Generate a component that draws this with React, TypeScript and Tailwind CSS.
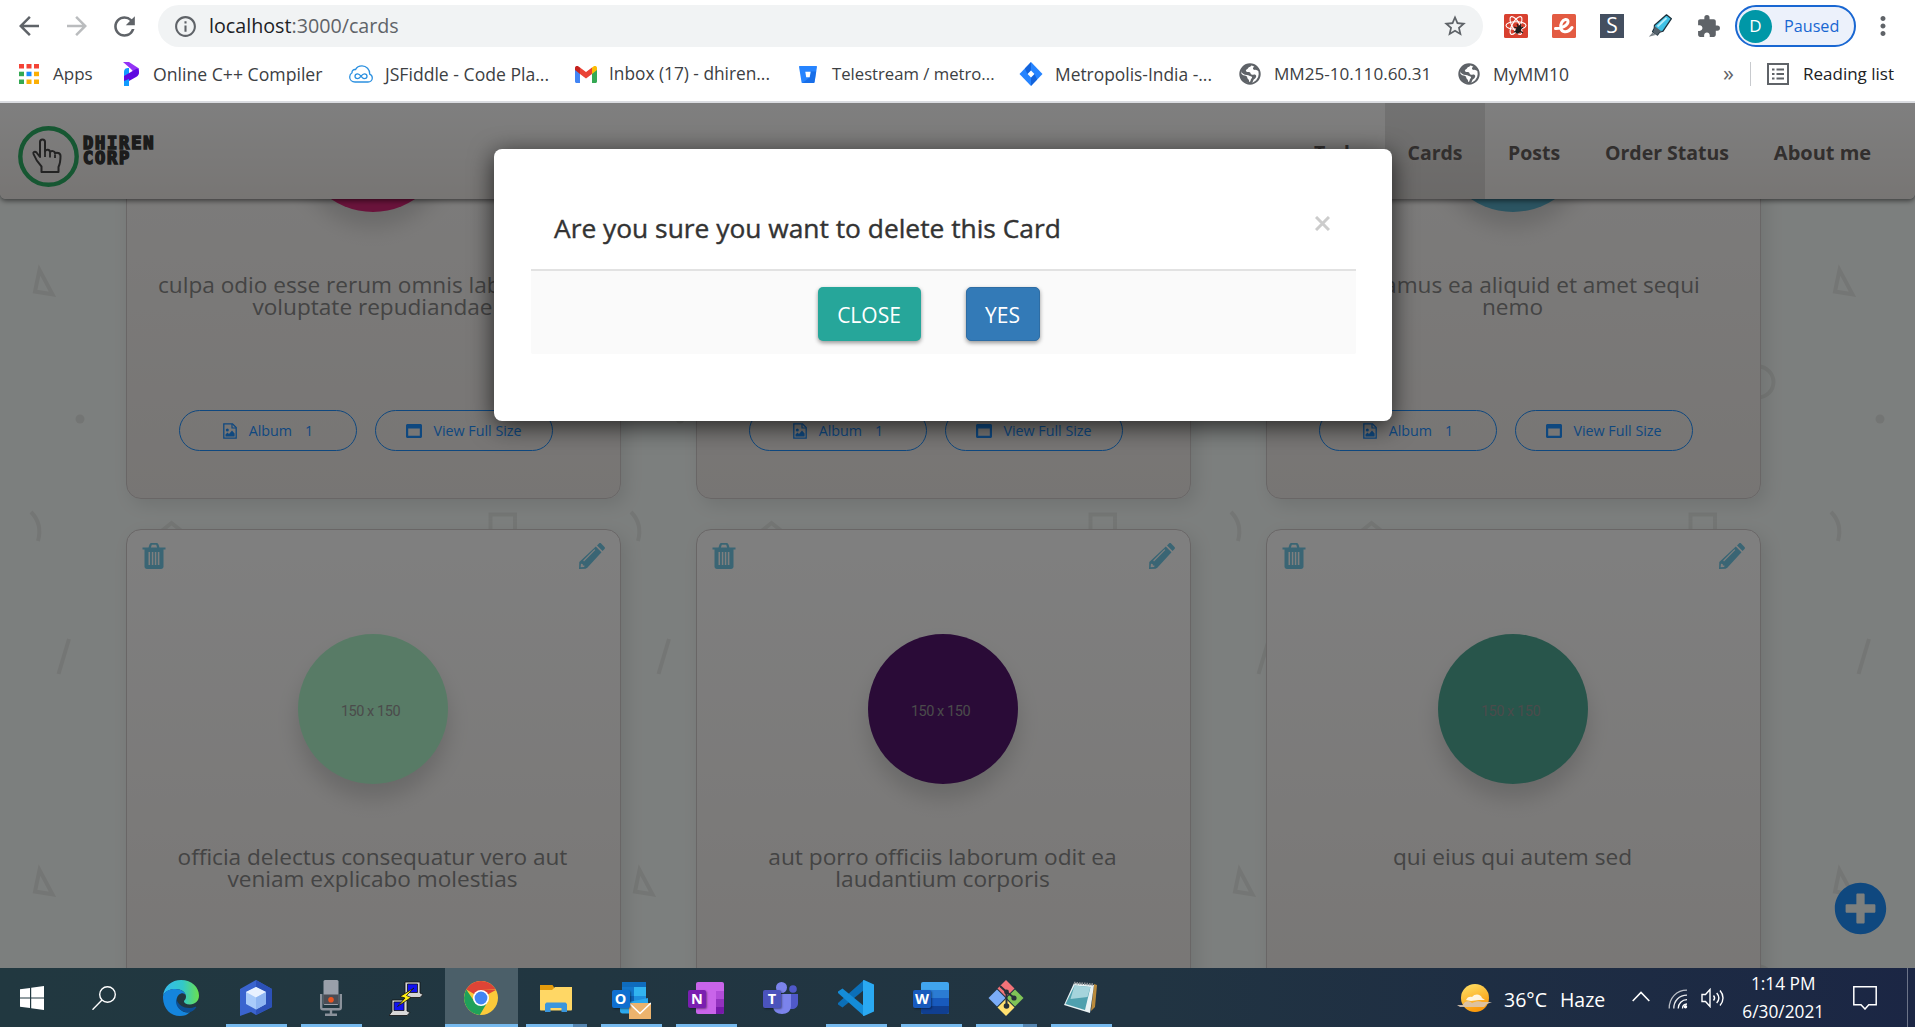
import React from 'react';
import {
  MdArrowBack,
  MdArrowForward,
  MdRefresh,
  MdInfoOutline,
  MdStarBorder,
  MdExtension,
  MdMoreVert,
} from 'react-icons/md';
import { FaPlusCircle } from 'react-icons/fa';

/* ---------- browser chrome icons ---------- */

const ReactDevIcon = () => (
  <svg viewBox="0 0 24 24" className="size-6 shrink-0">
    <rect width="24" height="24" rx="1.5" fill="#d8402f" />
    <g fill="none" stroke="#fff" strokeWidth="1.1">
      <ellipse cx="12" cy="11.5" rx="10" ry="3.8" />
      <ellipse cx="12" cy="11.5" rx="10" ry="3.8" transform="rotate(60 12 11.5)" />
      <ellipse cx="12" cy="11.5" rx="10" ry="3.8" transform="rotate(120 12 11.5)" />
    </g>
    <ellipse cx="14.5" cy="15.5" rx="2.6" ry="4.4" transform="rotate(25 14.5 15.5)" fill="#1d1d1d" />
    <path d="M10 13l3 1M10 18l3-1M19 13l-3 2M19 19l-3-2M13 10l1 2M17 10l-1 2" stroke="#1d1d1d" strokeWidth="1.2" />
  </svg>
);

const EIcon = () => (
  <svg viewBox="0 0 24 24" className="size-6 shrink-0">
    <rect width="24" height="24" rx="1.5" fill="#e35b42" />
    <path d="M3.5 14.5c5 .3 13-2.800 12.500-7.300-.4-2.800-4.500-2.200-6.300 1.300-2 3.800-1.400 9 3 9.300 3 .2 5.300-1.600 7.300-4.300" fill="none" stroke="#fff" strokeWidth="3" strokeLinecap="round" />
  </svg>
);

const MarkerIcon = () => (
  <svg viewBox="0 0 24 24" className="size-6 shrink-0">
    <path d="M18.500 .8l4.900 3.900-8.400 12.500-3.400 1-2.200 2.800-4.800-3.400 1.700-3.200.2-3.200z" fill="#3fc1e6" stroke="#1d2f3a" strokeWidth="1.300" strokeLinejoin="round" />
    <path d="M18.500 4L9.500 12.500" stroke="#b5ecfb" strokeWidth="1.800" />
    <path d="M6.500 12l7.500 5.800-2.800.8-2.200 2.600-4-3.200 1.500-2.900z" fill="#54606a" />
    <path d="M4.600 18.500l3 2.400-6.800 1.800z" fill="#7d858b" />
  </svg>
);

const AppsIcon = () => (
  <svg viewBox="0 0 20 20" className="size-5">
    <path d="M0 0h5v4.500H0zM7.500 0h5v4.500h-5zM15 0h5v4.500h-5z" fill="#f44336" />
    <path d="M0 7.700h5v4.500H0z" fill="#34a853" />
    <path d="M7.500 7.700h5v4.500h-5z" fill="#1a8cff" />
    <path d="M15 7.700h5v4.500h-5z" fill="#fbaf05" />
    <path d="M0 15.500h5V20H0z" fill="#34a853" />
    <path d="M7.500 15.500h5V20h-5zM15 15.500h5V20h-5z" fill="#fbaf05" />
  </svg>
);

const ProgrammizIcon = () => (
  <svg viewBox="0 0 16 24" className="-mt-px h-6 w-4">
    <path d="M0 0h6l10 6.500V11l-3 2-5-6z" fill="#9333f5" />
    <path d="M1 9.500C1 7 3 6 5 6h1v18H1z" fill="#119bff" />
    <path d="M1 14L14 6.500c1.500 1 2 2.500 2 4 0 2-1 3.500-2.500 4.300L6 19v-2l-5 2z" fill="#5f08e0" />
  </svg>
);

const FiddleIcon = () => (
  <svg viewBox="0 0 24 18" className="h-[18px] w-6" fill="none" stroke="#2b90e0">
    <path d="M6 17h13c2.500 0 4.300-1.800 4.300-4 0-1.900-1-3.300-2.600-3.900C21 4.500 17.300.8 13 .8c-3 0-5.400 1.500-6.500 3.800-2-.4-3.700 1-3.500 3.200C1.500 8.600.7 10 .7 12c0 3 2.300 5 5.300 5z" strokeWidth="1.300" />
    <path d="M12 11.200c-1.200-1.500-2.200-2.300-3.400-2.300-1.500 0-2.600 1-2.600 2.400s1.100 2.400 2.600 2.400c2.700 0 3.800-4.800 6.800-4.800 1.500 0 2.600 1 2.600 2.400s-1.100 2.400-2.600 2.400c-1.200 0-2.200-.9-3.400-2.500z" strokeWidth="1.300" />
  </svg>
);

const GmailIcon = () => (
  <svg viewBox="0 0 22 17" className="h-[17px] w-[22px]">
    <path d="M0 3v12.500C0 16.300.7 17 1.500 17H5V7z" fill="#4285f4" />
    <path d="M17 17h3.500c.8 0 1.500-.7 1.500-1.500V3l-5 4z" fill="#34a853" />
    <path d="M17 1.500V8l5-4V2c0-2-2-2.500-3.200-1.700z" fill="#fbbc04" />
    <path d="M5 8V1.500l6 4.600 6-4.600V8l-6 4.500z" fill="#ea4335" />
    <path d="M0 2v2l5 4V1.500L3.200.3C2 -.5 0 0 0 2z" fill="#c5221f" />
  </svg>
);

const BitbucketIcon = () => (
  <svg viewBox="0 0 18 17" className="h-[17px] w-[18px]">
    <path d="M.6 0h16.800c.4 0 .6.300.6.700L15.600 16c-.1.600-.4 1-1 1H3.500c-.6 0-1-.4-1-1L0 .700C0 .3.200 0 .6 0z" fill="#2684ff" />
    <path d="M12 5.500h5.200L15.600 16c-.1.600-.4 1-1 1H3.500l7.300-5.800z" fill="#0f5fd8" opacity=".6" />
    <path d="M6.300 5.700h5.300l-.9 5.600H7.200z" fill="#fff" />
  </svg>
);

const JiraIcon = () => (
  <svg viewBox="0 0 24 24" className="size-6">
    <path d="M12 0l11.500 12L12 24 .5 12z" fill="#2684ff" />
    <path d="M12 0v8.600L8.500 12 5.800 6.500zM12 24v-8.600l3.500-3.400 2.700 5.500z" fill="#0b55cc" opacity=".7" />
    <path d="M12 8.600l3.400 3.400-3.400 3.400L8.600 12z" fill="#fff" />
  </svg>
);

const GlobeIcon = () => (
  <svg viewBox="0 0 22 22" className="size-[22px]">
    <circle cx="11" cy="11" r="9.700" fill="#fff" stroke="#5f6368" strokeWidth="2" />
    <path d="M12 1.500c.5 1.500-.5 2.200-1.700 2.500-1.300.4-1 1.600-2.300 2.200-1.200.5-1.500 1.300-.7 2.200.8.800 2.400.2 3.400.8 1.200.7.700 2 1.800 2.400 1.300.4 2.300-.6 3.500 0 1.700.8 1.500 2.300.5 3.400-1 1-2 1.400-2.300 2.600-.2 1.200-.8 2.200-2.200 2.600C6 20.500 1 17 1.500 10c1.200 1.200 2.200 2.300 4 2.500 1.600.2 2.800.8 2.800 2.300 0 1.400 1.500 1.300 1.700 2.700l.2 1.500c2-.5 1-2.500 2.300-3.500 1.200-1 .5-2-.8-2.300-1.500-.3-2-1.200-3.700-1.200C5 12 2.500 10 2 8 3.500 4 7 1.500 12 1.500z" fill="#5f6368" />
    <path d="M15 3c-.3 1.500-1.500 2-.8 3.200.8 1.300 3 .3 4.300 1.200l2 1C19.500 5.500 17.500 3.500 15 3z" fill="#5f6368" />
  </svg>
);

const ReadingIcon = () => (
  <svg viewBox="0 0 22 22" className="size-[22px]" fill="none" stroke="#5f6368" strokeWidth="2">
    <rect x="1" y="1" width="20" height="20" />
    <path d="M5 6.500h2.500M9.500 6.500H17M5 11h2.500M9.500 11H17M5 15.500h2.500M9.500 15.500H17" />
  </svg>
);

/* ---------- page icons ---------- */

const TrashIcon = () => (
  <svg viewBox="0 0 24 26" className="h-[26px] w-6" fill="#74cbe8">
    <path d="M9.500 0h5c1 0 1.700.6 2 1.500l1 3H23.500v2H.5v-2h6l1-3C7.800.6 8.500 0 9.500 0zm.3 1.800l-.9 2.700h6.200l-.9-2.700z" />
    <path fillRule="evenodd" d="M2.500 6h19v17.500c0 1.600-1 2.500-2.500 2.500H5c-1.500 0-2.500-.9-2.500-2.500zM6.500 9v13h1.600V9zm3.300 0v13h1.500V9zm3 0v13h1.500V9zm3 0v13h1.600V9z" />
  </svg>
);

const PencilIcon = () => (
  <svg viewBox="0 0 26 26" className="size-[26px]" fill="#74cbe8">
    <path d="M18 2.400L20 .5c.6-.6 1.500-.6 2.100 0l3.400 3.400c.6.6.6 1.500 0 2.100l-1.900 2z" />
    <path fillRule="evenodd" d="M16.800 3.500l5.700 5.700L8.300 24.700 6.500 25.800 0 26l.3-6.900zM15.500 6.200L4.200 17.600l.8.800L16.300 7zM2 20.800l-.4 3.400 3.600-.3.300-1.300-1.600-.2-.2-1.500z" />
  </svg>
);

const AlbumIcon = () => (
  <svg viewBox="0 0 14 16" className="h-4 w-[14px]">
    <path d="M.8.800h8.700l3.700 3.700v10.700H.8z" fill="none" stroke="#1e90ff" strokeWidth="1.300" />
    <path d="M9 1v4h4" fill="none" stroke="#1e90ff" strokeWidth="1.200" />
    <circle cx="4.300" cy="7" r="1.500" fill="#1e90ff" />
    <path d="M2.500 13.500v-2l2-2 1.500 1.500 3-3.500 2.600 3v3z" fill="#1e90ff" />
  </svg>
);

const WindowIcon = () => (
  <svg viewBox="0 0 16 14" className="h-[14px] w-4">
    <path fillRule="evenodd" d="M1.500 0h13c.8 0 1.500.6 1.500 1.500v11c0 .9-.7 1.500-1.500 1.500h-13C.7 14 0 13.400 0 12.500v-11C0 .6.700 0 1.500 0zM2.200 4.500v7.300h11.600V4.500z" fill="#1e90ff" />
  </svg>
);

const Logo = () => (
  <div className="flex items-start">
    <svg viewBox="0 0 61 61" className="size-[61px]">
      <circle cx="30.500" cy="30.500" r="28.200" fill="none" stroke="#2cae64" strokeWidth="4.400" />
      <path
        d="M23.500 46v-5.500c-3.500-3.500-6-7.500-8-12.500-.7-2 1.500-3.200 3-1.500l3.500 4.500V16c0-3.500 5-3.500 5 0v9.500c.5-2.500 5-2.500 5 .800 1-2 5-1.500 5 1.200 1.500-1.500 5.500-.800 5.500 2.500 0 5-.5 8-2 11V46z"
        fill="none"
        stroke="#464646"
        strokeWidth="2"
        strokeLinejoin="round"
      />
      <path d="M27 25.500V31M32 27v4.500M37 28.500V32" stroke="#464646" strokeWidth="1.800" />
    </svg>
    <div className='mt-[10px] ml-[4px] font-["DejaVu_Sans_Mono",monospace] text-[17px] leading-[15px] font-bold tracking-[1.800px] text-[#383838] [-webkit-text-stroke:1.600px_#383838]'>
      DHIREN
      <br />
      CORP
    </div>
  </div>
);

/* ---------- browser ---------- */

const bookmarks = [
  { item: 'w-[104px]', box: 'w-[34px]', text: 'Apps', size: 'text-[17px]', icon: <AppsIcon /> },
  { item: 'w-[226px]', box: 'w-[30px]', text: 'Online C++ Compiler', size: 'text-[17.650px]', icon: <ProgrammizIcon /> },
  { item: 'w-[226px]', box: 'w-[36px]', text: 'JSFiddle - Code Pla...', size: 'text-[17.600px]', icon: <FiddleIcon /> },
  { item: 'w-[224px]', box: 'w-[34px]', text: 'Inbox (17) - dhiren...', size: 'text-[17.300px]', icon: <GmailIcon /> },
  { item: 'w-[220px]', box: 'w-[33px]', text: 'Telestream / metro...', size: 'text-[16.700px]', icon: <BitbucketIcon /> },
  { item: 'w-[220px]', box: 'w-[36px]', text: 'Metropolis-India -...', size: 'text-[17.400px]', icon: <JiraIcon /> },
  { item: 'w-[219px]', box: 'w-[35px]', text: 'MM25-10.110.60.31', size: 'text-[17.100px]', icon: <GlobeIcon /> },
  { item: 'w-[120px]', box: 'w-[35px]', text: 'MyMM10', size: 'text-[17.500px]', icon: <GlobeIcon /> },
];

const BrowserChrome = () => (
  <div className="flex h-[103px] shrink-0 flex-col border-b-2 border-[#dadce0] bg-white text-[#3c4043]">
    <div className="flex h-[52px] items-center text-[#5f6368]">
      <MdArrowBack size={30} className="ml-[14px] shrink-0" />
      <MdArrowForward size={30} className="ml-[18px] shrink-0 text-[#babcbe]" />
      <MdRefresh size={31} className="ml-[17px] shrink-0" />
      <div className="ml-[18px] flex h-[42px] w-[1325px] shrink-0 items-center rounded-full bg-[#f1f3f4] pr-[15px] pl-[15px]">
        <MdInfoOutline size={25} />
        <span className="ml-[11px] text-[19.700px] text-[#202124]">
          localhost<span className="text-[#5f6368]">:3000/cards</span>
        </span>
        <MdStarBorder size={26} className="ml-auto" />
      </div>
      <div className="ml-[21px] flex shrink-0 items-center gap-6">
        <ReactDevIcon />
        <EIcon />
        <div className="flex size-6 items-center justify-center bg-[#444f60] text-[21px] text-white">S</div>
        <MarkerIcon />
        <MdExtension size={25} />
      </div>
      <div className="ml-[14px] flex h-[42px] w-[121px] shrink-0 items-center rounded-full border-2 border-[#1967d2] bg-[#ecf1fb] pl-[2px] text-[#1967d2]">
        <div className="flex size-[33px] items-center justify-center rounded-full bg-[#0097a7] text-[17px] text-white">D</div>
        <span className="ml-[12px] text-[16.200px]">Paused</span>
      </div>
      <MdMoreVert size={30} className="ml-[12px] shrink-0" />
    </div>
    <div className="flex h-[44px] items-center pl-[19px] leading-6">
      {bookmarks.map((b) => (
        <div key={b.text} className={`flex shrink-0 items-center whitespace-nowrap ${b.item}`}>
          <span className={`shrink-0 ${b.box}`}>{b.icon}</span>
          <span className={b.size}>{b.text}</span>
        </div>
      ))}
      <span className="ml-auto pb-1 text-[22px] text-[#5f6368]">»</span>
      <div className="ml-[16px] h-6 w-px bg-[#c8cace]" />
      <span className="ml-[16px]">
        <ReadingIcon />
      </span>
      <span className="mr-[21px] ml-[14px] text-[17px] text-[#202124]">Reading list</span>
    </div>
  </div>
);

/* ---------- page ---------- */

const BackgroundPattern = () => (
  <svg className="absolute inset-0 h-full w-full">
    <defs>
      <pattern id="shapes" width="600" height="600" patternUnits="userSpaceOnUse">
        <g fill="none" stroke="#e9edea" strokeWidth="4">
          <path d="M39.500 167L35 188.500l17.500 2.800z" />
          <circle cx="80" cy="316" r="4.500" fill="#e7ebe8" stroke="none" />
          <path d="M31 409c8 8 10 18 7 29" />
          <path d="M159 430l12.500-10 12.500 10v14h-25z" />
          <path d="M490.500 411.500H515V436h-24.500z" />
          <path d="M69 536l-10.500 35" />
          <path d="M117 654l8 5-4 8 7 4-3 11" />
          <circle cx="558" cy="279" r="15.500" />
        </g>
      </pattern>
    </defs>
    <rect width="100%" height="100%" fill="url(#shapes)" />
  </svg>
);

const cards = [
  { title: 'culpa odio esse rerum omnis laboriosam voluptate repudiandae', bg: 'bg-[#d32776]', size: 'text-[22.600px]' },
  { title: 'natus nisi omnis corporis facere molestiae rerum in', bg: 'bg-[#f66b97]', size: 'text-[22.600px]' },
  { title: 'accusamus ea aliquid et amet sequi nemo', bg: 'bg-[#56a8c2]', size: 'text-[22.600px]' },
  { title: 'officia delectus consequatur vero aut veniam explicabo molestias', bg: 'bg-[#b0f7cc]', size: 'text-[22.600px]' },
  { title: 'aut porro officiis laborum odit ea laudantium corporis', bg: 'bg-[#54176f]', size: 'text-[22.700px]' },
  { title: 'qui eius qui autem sed', bg: 'bg-[#51aa97]', size: 'text-[22.650px]' },
];

const PillButton = ({ children }: { children: React.ReactNode }) => (
  <button className="flex h-[41px] w-[178px] items-center justify-center rounded-full border border-[#1e90ff] text-[14.300px] text-[#1e90ff]">
    {children}
  </button>
);

const Card = ({ title, bg, size }: { title: string; bg: string; size: string }) => (
  <div className="flex h-[542px] flex-col rounded-[15px] border border-[#d2cccd] bg-linear-to-b from-white to-[#efebe8] shadow-[5px_6px_18px_rgba(0,0,0,0.1)]">
    <div className="flex h-[104px] items-start justify-between pt-[13px] pr-[15px] pl-[15px]">
      <TrashIcon />
      <PencilIcon />
    </div>
    <div className={`mr-[2px] flex size-[150px] shrink-0 items-center justify-center self-center rounded-full pt-[5px] pr-[4px] font-["Roboto",sans-serif] text-[14.500px] tracking-[-0.450px] text-[#969696] shadow-[0_14px_22px_rgba(0,0,0,0.15)] ${bg}`}>
      150 x 150
    </div>
    <div className={`mt-[62px] h-[136px] pr-[29px] pl-[27px] text-center leading-[22px] text-[#888] ${size}`}>{title}</div>
    <div className="flex pl-[52px]">
      <PillButton>
        <AlbumIcon />
        <span className="ml-[12px]">Album</span>
        <span className="ml-[13px]">1</span>
      </PillButton>
      <span className="w-[18px]" />
      <PillButton>
        <WindowIcon />
        <span className="ml-[11px]">View Full Size</span>
      </PillButton>
    </div>
  </div>
);

const Nav = () => (
  <nav className="relative z-10 flex h-[96px] items-stretch rounded-b-[6px] bg-linear-to-b from-white to-[#efebe8] pr-[21px] pl-[18px] text-[#645e5c] shadow-[0_2px_5px_rgba(0,0,0,0.5)]">
    <div className="pt-[23px]">
      <Logo />
    </div>
    <div className="ml-auto flex items-center text-[19.500px] font-bold">
      <a className="flex h-full w-[94px] items-center justify-center pt-[3px]">Todo</a>
      <a className="flex h-full w-[100px] items-center justify-center bg-black/10 pt-[3px]">Cards</a>
      <a className="flex h-full w-[98px] items-center justify-center pt-[3px]">Posts</a>
      <a className="flex h-full w-[168px] items-center justify-center pt-[3px]">Order Status</a>
      <a className="flex h-full w-[143px] items-center justify-center pt-[4px] text-[20px]">About me</a>
    </div>
  </nav>
);

const DeleteModal = () => (
  <div className="absolute inset-0 z-20 flex justify-center bg-black/50 pt-[46px] pr-[29px]">
    <div className="h-[272px] w-[898px] rounded-[8px] bg-white pr-[36px] pl-[37px] shadow-[0_5px_25px_rgba(0,0,0,0.7)]">
      <div className="flex h-[122px] items-start justify-between border-b-2 border-[#e2e2e2] pr-[26px] pl-[23px]">
        <h4 className="mt-[61px] text-[26.350px] leading-9 text-[#333] [-webkit-text-stroke:0.400px_#333]">
          Are you sure you want to delete this Card
        </h4>
        <svg viewBox="0 0 15 15" className="mt-[67px] size-[15px]" stroke="#ccc" strokeWidth="3">
          <path d="M1 1l13 13M14 1L1 14" />
        </svg>
      </div>
      <div className="flex h-[83px] items-start justify-center gap-[45px] rounded-b-[2px] bg-[#fafafa] pt-[16px] pr-[30px] text-[21px] text-white">
        <button className="h-[54px] w-[103px] rounded-[5px] bg-[#26a69a] pt-[4px] shadow-[0_2px_4px_rgba(0,0,0,0.4)]">CLOSE</button>
        <button className="h-[54px] w-[74px] rounded-[5px] border border-[#2e6da4] bg-[#337ab7] pt-[4px] shadow-[0_2px_4px_rgba(0,0,0,0.4)]">YES</button>
      </div>
    </div>
  </div>
);

const Page = () => (
  <div className="relative h-[865px] shrink-0 overflow-hidden bg-[#f9fefc]">
    <BackgroundPattern />
    <Nav />
    <main className="relative -mt-[242px] ml-[126px] grid w-[1635px] grid-cols-[495px_495px_495px] justify-between gap-y-[30px]">
      {cards.map((c) => (
        <Card key={c.title} {...c} />
      ))}
    </main>
    <FaPlusCircle size={53} className="absolute right-[28px] bottom-[33px] text-[#1e90ff]" />
    <DeleteModal />
  </div>
);

/* ---------- taskbar ---------- */

const WinIcon = () => (
  <svg viewBox="0 0 24 24" className="size-6" fill="#fff">
    <path d="M0 3.300l10-1.400V11.400H0zM11.200 1.700L24 0v11.400H11.200zM0 12.600h10v9.500L0 20.700zM11.200 12.600H24V24l-12.800-1.700z" />
  </svg>
);
const SearchIcon = () => (
  <svg viewBox="0 0 24 24" className="size-6" fill="none" stroke="#fff" strokeWidth="1.400">
    <circle cx="15.500" cy="8.500" r="7.800" />
    <path d="M10 14L.5 23.700" />
  </svg>
);
const EdgeIcon = () => (
  <svg viewBox="0 0 36 36" className="size-9">
    <defs>
      <linearGradient id="edgeTop" x1="0" x2="1">
        <stop offset="0" stopColor="#35b9ee" />
        <stop offset=".55" stopColor="#33c8c8" />
        <stop offset="1" stopColor="#6be04e" />
      </linearGradient>
    </defs>
    <path d="M0 16C1 6 9 0 18 0c11 0 18 7.500 18 15.500 0 5.500-4 9-9 9-4 0-6-1.500-6-3 0-1.300 2-1.800 2-5C23 12 18 9 12.500 9 6 9 1.500 12 0 16z" fill="url(#edgeTop)" />
    <path d="M0 16c1.500-4.500 6-7 12.500-7C18 9 22 12 22.500 15c-1-1.300-3-2-4.500-1.500-3 1-4.500 4-4.500 7C13.500 28 20 34 27 32c-3 3-6 4-10 4C7 36-.5 28 0 16z" fill="#1585dd" />
    <path d="M13.200 19c-1.500 7 4 13 12 13.500 3-.3 6-2 8-5 .3-.6-.3-1-.9-.700-2 1-4 1.200-6 1.200-6 0-11-3-13.100-9z" fill="#0c4f94" />
  </svg>
);
const HexIcon = () => (
  <svg viewBox="0 0 34 36" className="h-9 w-[34px]">
    <path d="M17 0l16 9v18l-16 8-5-3-11 4V9z" fill="#3a64cf" />
    <path d="M17 0l16 9v18L17 35z" fill="#2c51b8" />
    <path d="M17 7l10 5v12l-10 5.500L7 24V12z" fill="#a9cbfa" />
    <path d="M17 7l10 5-10 5.500L7 12z" fill="#e8f1ff" />
    <path d="M17 17.500l10-5.500v12l-10 5.500z" fill="#8fb6f2" />
  </svg>
);
const MicIcon = () => (
  <svg viewBox="0 0 22 36" className="h-9 w-[22px]">
    <path d="M1.200 14v13.500c0 1 .8 1.700 1.800 1.700h16c1 0 1.800-.7 1.800-1.700V14M11 29v4.500M5 34.700h12" fill="none" stroke="#8b929b" strokeWidth="2.400" />
    <rect x="3.500" y="0" width="15" height="25" rx="1.500" fill="#9aa0aa" />
    <path d="M3.500 14.500h15V24h-15z" fill="#4a4d55" />
    <circle cx="11" cy="19.700" r="2.800" fill="#ea5420" />
  </svg>
);
const PuttyIcon = () => (
  <svg viewBox="0 0 34 35" className="h-[35px] w-[34px]" stroke="#111" strokeWidth=".8">
    <path d="M16 1h15v11l3 1.500-3 3H14l2-4z" fill="#d4d4d4" />
    <path d="M18.500 3h10v8.500h-10z" fill="#1212f0" />
    <path d="M3 19h15v11l3 1.500-3 3H0l3-4z" fill="#d8d8d8" />
    <path d="M5 21h10v8.500H5z" fill="#1212f0" />
    <path d="M25 7L11 15.500l5 1.500-7.500 8.500L22 16.500l-4.500-2z" fill="#ffee12" />
  </svg>
);
const ChromeIcon = () => (
  <svg viewBox="0 0 34 34" className="size-[34px]">
    <circle cx="17" cy="17" r="17" fill="#fbc93a" />
    <path d="M17 17L2.300 8.500A17 17 0 0 1 31.700 8.500L17 9z" fill="#de4436" />
    <path d="M31.900 9H17v8z" fill="#de4436" />
    <path d="M2.300 8.500a17 17 0 0 0 13.500 25.400L23.500 21 17 17 10 20z" fill="#1fa15a" />
    <circle cx="17" cy="17" r="8" fill="#fff" />
    <circle cx="17" cy="17" r="6.400" fill="#4285f4" />
  </svg>
);
const FolderIcon = () => (
  <svg viewBox="0 0 32 28" className="h-7 w-8">
    <path d="M0 1h12.500l2 3V8H0z" fill="#e49b0c" />
    <path d="M0 6h12l3-3h17v22.500c0 .500-.4 1-1 1H1c-.6 0-1-.5-1-1z" fill="#ffd765" />
    <path d="M5 28v-8l1.500-1.500h19L27 20v8h-5.500v-4h-11v4z" fill="#3a96dd" />
  </svg>
);

const LetterTile = ({ letter, color }: { letter: string; color: string }) => (
  <span className={`absolute top-[10px] left-0 flex h-[18px] w-[18px] items-center justify-center rounded-[2px] text-[14.500px] leading-[18px] font-bold text-white shadow-[1px_1px_2px_rgba(0,0,0,0.4)] ${color}`}>
    {letter}
  </span>
);

const OutlookIcon = () => (
  <div className="relative h-9 w-[39px] pt-[2px]">
    <svg viewBox="0 0 39 37" className="h-[37px] w-[39px]">
      <path d="M10 0h24v12H10z" fill="#0f6cbd" />
      <path d="M10 5h12v10H10z" fill="#1377cc" />
      <path d="M22 5h12v9H22z" fill="#32b4f0" />
      <path d="M10 14h12v10H10z" fill="#0f5fb0" />
      <path d="M22 14h12v8H22z" fill="#1f8fdd" />
      <path d="M8 22l28-6v13c0 1.600-1 2.500-2.500 2.500h-23C9 31.500 8 30.600 8 29z" fill="#2aa8ee" />
      <path d="M17 21h22v16H17z" fill="#ecb36d" />
      <path d="M17 21l11 10.500L39 21" fill="none" stroke="#fff" strokeWidth="1.600" />
    </svg>
    <LetterTile letter="O" color="bg-[#0f6fd0]" />
  </div>
);
const OneNoteIcon = () => (
  <div className="relative h-9 w-9 pt-[2px]">
    <svg viewBox="0 0 36 32" className="h-8 w-9">
      <rect x="8" y="0" width="28" height="32" rx="2" fill="#c964ea" />
      <path d="M28 9h8v8h-8z" fill="#b14cd8" />
      <path d="M28 17h8v8h-8z" fill="#9332bf" />
      <path d="M28 25h8v5c0 1.200-.8 2-2 2h-6z" fill="#7719aa" />
    </svg>
    <LetterTile letter="N" color="bg-[#7a1fb0]" />
  </div>
);
const TeamsIcon = () => (
  <div className="relative h-9 w-9 pt-[2px]">
    <svg viewBox="0 0 36 32" className="h-8 w-9">
      <circle cx="30" cy="7" r="3.800" fill="#5059c9" />
      <path d="M24 12h11v9c0 4-3 6-6 6h-5z" fill="#5059c9" />
      <circle cx="18.500" cy="5.500" r="5.500" fill="#7b83eb" />
      <path d="M10 12h18v12c0 5-4 8-9 8s-9-3-9-8z" fill="#7b83eb" />
    </svg>
    <LetterTile letter="T" color="bg-[#4b53bc]" />
  </div>
);
const WordIcon = () => (
  <div className="relative h-9 w-9 pt-[2px]">
    <svg viewBox="0 0 36 32" className="h-8 w-9">
      <rect x="8" y="0" width="28" height="32" rx="2" fill="#41a5ee" />
      <path d="M8 8h28v8H8z" fill="#2b7cd3" />
      <path d="M8 16h28v8H8z" fill="#185abd" />
      <path d="M8 24h28v6c0 1.200-.8 2-2 2H10c-1.200 0-2-.8-2-2z" fill="#103f91" />
    </svg>
    <LetterTile letter="W" color="bg-[#185abd]" />
  </div>
);
const CodeIcon = () => (
  <svg viewBox="0 0 36 36" className="size-9">
    <path d="M26 0v10L4.500 27.500 0 24.500v-1.500z" fill="#0b6fb8" />
    <path d="M26 36V26L4.500 8.500 0 11.500V13z" fill="#148cd8" />
    <path d="M26 0l10 4.500v27L26 36c-.6 0-1-.3-1-1V1c0-.7.400-1 1-1z" fill="#2aa9f2" />
  </svg>
);
const GitIcon = () => (
  <svg viewBox="0 0 36 36" className="size-9">
    <path d="M18 0l8.500 8.500L18 17 9.500 8.500z" fill="#f27379" />
    <path d="M9 9.500L17.500 18 9 26.500.5 18z" fill="#7badf8" />
    <path d="M27 9.500l8.500 8.500-8.500 8.500-8.500-8.500z" fill="#80c457" />
    <path d="M18 19l8.500 8.500L18 36l-8.500-8.500z" fill="#ffe070" />
    <path d="M12 6l6.500 6v15M18.500 12l8 6" fill="none" stroke="#26303a" strokeWidth="2" />
    <circle cx="18.500" cy="26" r="2.800" fill="#26303a" />
    <circle cx="26" cy="18" r="2.600" fill="#26303a" />
    <circle cx="18.500" cy="12" r="2.400" fill="#26303a" />
  </svg>
);
const NotepadIcon = () => (
  <svg viewBox="0 0 34 36" className="h-9 w-[34px]">
    <path d="M30 4l3 1-2 22-4 4z" fill="#b98a3c" />
    <path d="M10 3l20 2-4 28L0 25z" fill="#e9f2f4" />
    <path d="M10.500 5.500l16 1.500-5.500 23L1.500 24z" fill="#4fa0ae" />
    <path d="M10.500 5.500l16 1.500-3 10-17 2z" fill="#a5d4dc" />
    <path d="M10 3l20 1.500" stroke="#8b8f93" strokeWidth="2.500" strokeDasharray="1.500 1" />
  </svg>
);

const tasks = [
  { id: 'edge', icon: <EdgeIcon />, line: '', more: '' },
  { id: 'cube', icon: <HexIcon />, line: 'w-[61px]', more: '' },
  { id: 'mic', icon: <MicIcon />, line: 'w-[61px]', more: '' },
  { id: 'putty', icon: <PuttyIcon />, line: '', more: '' },
  { id: 'chrome', icon: <ChromeIcon />, line: 'w-[73px]', more: '' },
  { id: 'files', icon: <FolderIcon />, line: 'w-[47px]', more: 'w-[14px]' },
  { id: 'outlook', icon: <OutlookIcon />, line: 'w-[61px]', more: '' },
  { id: 'onenote', icon: <OneNoteIcon />, line: 'w-[61px]', more: '' },
  { id: 'teams', icon: <TeamsIcon />, line: '', more: '' },
  { id: 'code', icon: <CodeIcon />, line: 'w-[61px]', more: '' },
  { id: 'word', icon: <WordIcon />, line: 'w-[61px]', more: '' },
  { id: 'git', icon: <GitIcon />, line: 'w-[47px]', more: 'w-[14px]' },
  { id: 'notepad', icon: <NotepadIcon />, line: 'w-[61px]', more: '' },
];

const Taskbar = () => (
  <div className="flex h-[59px] shrink-0 items-stretch bg-linear-to-r from-[#213840] via-[#213442] via-60% to-[#1b2644] text-white">
    <div className="flex w-[64px] items-center justify-center">
      <WinIcon />
    </div>
    <div className="flex w-[80px] items-center justify-center">
      <SearchIcon />
    </div>
    {tasks.map((t) => (
      <div key={t.id} className={`flex w-[75px] flex-col items-center px-px ${t.id === 'chrome' ? 'bg-[#4b5f69] bg-clip-content' : ''}`}>
        <div className="flex h-[56px] items-center pt-[4px] pr-px">{t.icon}</div>
        <div className="flex h-[3px]">
          <span className={`bg-[#76b9ed] ${t.line}`} />
          <span className={`bg-[#5585b0] ${t.more}`} />
        </div>
      </div>
    ))}
    <svg viewBox="0 0 36 30" className="mt-[15px] ml-[338px] h-[30px] w-9 shrink-0">
      <defs>
        <linearGradient id="sun" x1="0" y1="0" x2=".4" y2="1">
          <stop offset="0" stopColor="#ffe36a" />
          <stop offset="1" stopColor="#fb9a0c" />
        </linearGradient>
      </defs>
      <circle cx="18" cy="15" r="14" fill="url(#sun)" />
      <path d="M9 17c1-3 4-4 6-3 3-4 9-3 10 1l3 2h-6l-8 1z" fill="#fff" opacity=".85" />
      <path d="M0 22h6c1-4 6-5 9-2 4-2 8-2 10-1h10l-5 2-3 3H3z" fill="#d9c4ae" opacity=".9" />
    </svg>
    <span className="mt-[18px] ml-[11px] text-[19.500px] leading-[28px]">36°C</span>
    <span className="mt-[18px] ml-[13px] text-[19.500px] leading-[28px]">Haze</span>
    <svg viewBox="0 0 18 11" className="mt-[23px] ml-[27px] h-[11px] w-[18px] shrink-0" fill="none" stroke="#fff" strokeWidth="1.600">
      <path d="M.7 10L9 1.500 17.300 10" />
    </svg>
    <svg viewBox="0 0 20 20" className="mt-[21px] ml-[18px] size-5 shrink-0" fill="none" stroke="#fff" strokeWidth="1.300">
      <path d="M1.200 19.500C1.200 9 8.500 1.200 19 1.200" opacity=".7" />
      <path d="M5.800 19.500c0-7.500 5.200-13.300 13.200-13.300" opacity=".9" />
      <path d="M10.200 19.500c0-5 3.800-8.800 8.800-8.800M14.500 19.500c0-2.700 1.900-4.300 4.500-4.500" />
      <circle cx="17.500" cy="17.800" r="1.700" fill="#fff" stroke="none" />
    </svg>
    <svg viewBox="0 0 24 20" className="mt-[20px] ml-[13px] h-5 w-6 shrink-0" fill="none" stroke="#fff" strokeWidth="1.400">
      <path d="M1 6.500h3.500L9 1.500v17L4.500 13.500H1z" />
      <path d="M12.500 7.500c1.300 1.500 1.300 3.500 0 5M15.700 5c2.600 3 2.600 7 0 10M19 2.500c4 4.500 4 10.500 0 15" />
    </svg>
    <div className="mt-[2px] ml-[16px] w-[84px] text-center text-[17.300px] leading-[28px] whitespace-nowrap">
      1:14 PM
      <br />
      6/30/2021
    </div>
    <svg viewBox="0 0 24 24" className="mt-[18px] ml-[28px] size-6 shrink-0" fill="none" stroke="#fff" strokeWidth="1.500">
      <path d="M.8.800h22.400v18h-7.400L12 23l-4-4.200H.8z" />
    </svg>
    <div className="ml-[30px] w-px bg-[#6c7488]" />
  </div>
);

export default function App() {
  return (
    <div className='flex h-[1027px] w-[1915px] flex-col overflow-hidden font-["Open_Sans",sans-serif]'>
      <BrowserChrome />
      <Page />
      <Taskbar />
    </div>
  );
}
